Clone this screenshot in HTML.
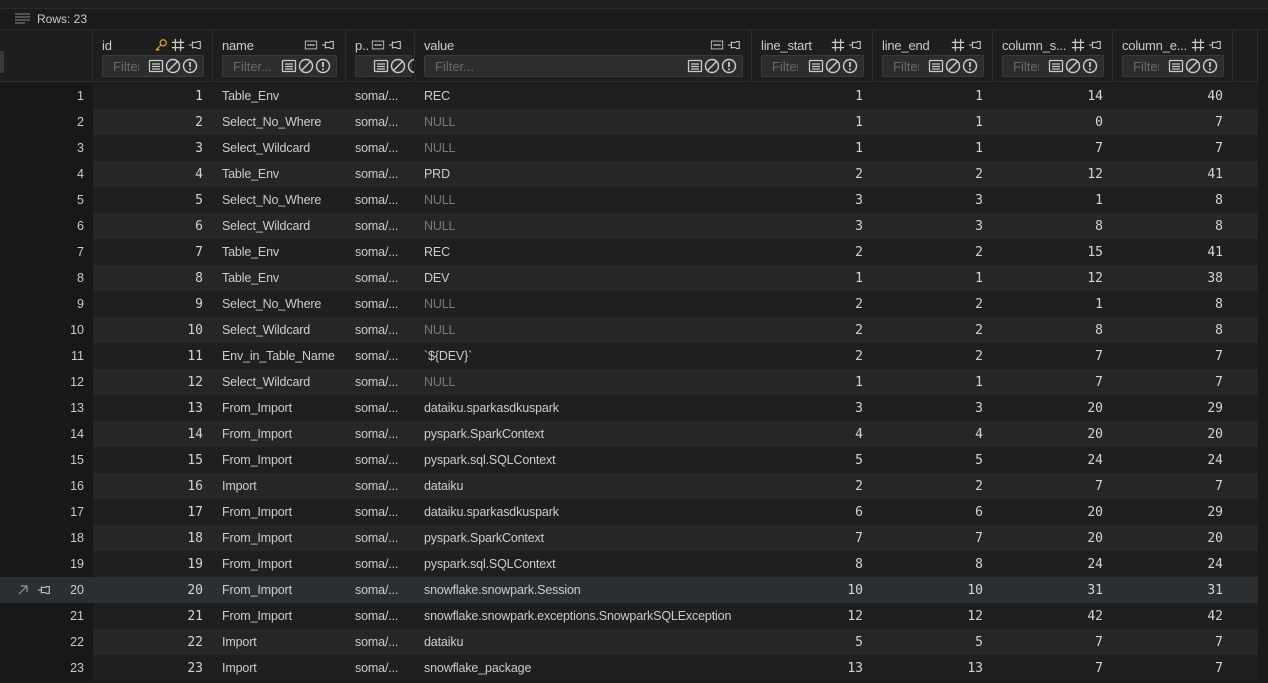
<!DOCTYPE html>
<html><head><meta charset="utf-8">
<style>
*{box-sizing:border-box;margin:0;padding:0}
body{width:1268px;height:683px;background:#1a1a1a;overflow:hidden;position:relative;font-family:"Liberation Sans","DejaVu Sans",sans-serif;font-size:12.5px;color:#cccccc}
.top{position:absolute;left:0;top:0;width:1268px;height:9px;background:#1f1f1f;border-bottom:1px solid #2b2b2b}
.bar{position:absolute;left:0;top:9px;width:1268px;height:21px;background:#1b1b1b;border-bottom:1px solid #2b2b2b}
.bar span{position:absolute;left:37px;top:3px;font-size:12px;color:#cccccc}
.strip{position:absolute;left:0;top:51px;width:4px;height:22px;background:#3a3a3a}
.hdr{position:absolute;top:30px;height:52px;background:#1e1e1e;border-bottom:1px solid #2e2e2e;border-right:1px solid #2e2e2e}
.hl{position:absolute;left:9px;top:8px;font-size:13px;letter-spacing:-0.2px;color:#cccccc;white-space:nowrap}
.hi{position:absolute;right:10px;top:8px;display:flex;gap:3px}
.fb{position:absolute;left:9px;right:8px;top:25px;height:22px;background:#2d2d2d;border:1px solid #3a3a3a;border-radius:2px}
.fb span{position:absolute;left:10px;top:3px;color:#6b6b6b;font-size:13px;white-space:nowrap;overflow:hidden}
.fi{position:absolute;right:5px;top:2px;display:flex;gap:1px}
svg{display:block}
table{position:absolute;left:0;top:83px;border-collapse:collapse;table-layout:fixed;width:1258px}
td{height:26px;padding:0 9px;white-space:nowrap;overflow:hidden;font-size:12.5px;letter-spacing:-0.15px}
tr:nth-child(odd) td{background:#1f1f1f}
tr:nth-child(even) td{background:#262626}
td.ix{background:#181818 !important;text-align:right;padding-right:9px;color:#cccccc;letter-spacing:0}
.n{text-align:right;font-family:"DejaVu Sans Mono","Liberation Mono",monospace;font-size:13px;padding-right:10px;color:#d4d4d4;letter-spacing:0}
.nl{color:#7a7a7a}
tr.sel td{background:#2b2f31 !important}
</style></head><body>
<svg width="0" height="0" style="position:absolute">
<defs>
<symbol id="pin" viewBox="0 0 16 16"><path d="M1 8h4M5 4v8M5 5h5l1 -1h3v8h-3l-1-1H5" fill="none" stroke="#cccccc" stroke-width="1.2"/></symbol>
<symbol id="hash" viewBox="0 0 16 16"><path d="M5 1v14M11 1v14M1 5h14M1 11h14" fill="none" stroke="#cccccc" stroke-width="1.4"/></symbol>
<symbol id="abc" viewBox="0 0 16 16"><rect x="1.5" y="3.5" width="13" height="9" fill="none" stroke="#cccccc"/><path d="M4 8h8" stroke="#cccccc" stroke-width="2" stroke-dasharray="1.5 .7"/></symbol>
<symbol id="key" viewBox="0 0 16 16"><circle cx="10.5" cy="5.5" r="3.5" fill="none" stroke="#e0a030" stroke-width="1.4"/><path d="M8 8L2 14M4 12l2 2M3 13l1.5 1.5" fill="none" stroke="#e0a030" stroke-width="1.4"/></symbol>
<symbol id="lst" viewBox="0 0 16 16"><rect x="1.5" y="2.5" width="13" height="11" rx="1" fill="none" stroke="#cccccc" stroke-width="1.3"/><path d="M4 6h8M4 8.5h8M4 11h8" stroke="#cccccc" stroke-width="1.2"/></symbol>
<symbol id="nul" viewBox="0 0 16 16"><circle cx="8" cy="8" r="6.5" fill="none" stroke="#cccccc" stroke-width="1.4"/><path d="M3.5 12.5l9-9" stroke="#cccccc" stroke-width="1.4"/></symbol>
<symbol id="exc" viewBox="0 0 16 16"><circle cx="8" cy="8" r="6.5" fill="none" stroke="#cccccc" stroke-width="1.4"/><path d="M8 4v5" stroke="#cccccc" stroke-width="1.8"/><circle cx="8" cy="11.3" r="1" fill="#cccccc"/></symbol>
</defs></svg>
<div class="top"></div>
<div class="bar"><svg style="position:absolute;left:15px;top:4px" width="16" height="12" viewBox="0 0 16 12"><path d="M0 1h15M0 4h15M0 7h15M0 10h10" stroke="#8a8a8a" stroke-width="1"/></svg><span>Rows: 23</span></div>
<div class="hdr" style="left:0;width:93px;background:#1e1e1e"></div>
<div class="strip"></div>

<div class="hdr" style="left:93px;width:120px"><div class="hl">id</div><div class="hi"><svg width="14" height="14"><use href="#key"/></svg><svg width="14" height="14"><use href="#hash"/></svg><svg width="14" height="14"><use href="#pin"/></svg></div><div class="fb"><span style="width:26px">Filter...</span><div class="fi"><svg width="16" height="16"><use href="#lst"/></svg><svg width="16" height="16"><use href="#nul"/></svg><svg width="16" height="16"><use href="#exc"/></svg></div></div></div>

<div class="hdr" style="left:213px;width:133px"><div class="hl">name</div><div class="hi"><svg width="14" height="14"><use href="#abc"/></svg><svg width="14" height="14"><use href="#pin"/></svg></div><div class="fb"><span style="width:40px">Filter...</span><div class="fi"><svg width="16" height="16"><use href="#lst"/></svg><svg width="16" height="16"><use href="#nul"/></svg><svg width="16" height="16"><use href="#exc"/></svg></div></div></div>

<div class="hdr" style="left:346px;width:69px;overflow:hidden"><div class="hl">p..</div><div class="hi" style="right:12px"><svg width="14" height="14"><use href="#abc"/></svg><svg width="14" height="14"><use href="#pin"/></svg></div><div class="fb" style="right:2px"><div class="fi" style="right:-12px"><svg width="16" height="16"><use href="#lst"/></svg><svg width="16" height="16"><use href="#nul"/></svg><svg width="16" height="16"><use href="#exc"/></svg></div></div></div>

<div class="hdr" style="left:415px;width:337px"><div class="hl">value</div><div class="hi"><svg width="14" height="14"><use href="#abc"/></svg><svg width="14" height="14"><use href="#pin"/></svg></div><div class="fb"><span>Filter...</span><div class="fi"><svg width="16" height="16"><use href="#lst"/></svg><svg width="16" height="16"><use href="#nul"/></svg><svg width="16" height="16"><use href="#exc"/></svg></div></div></div>

<div class="hdr" style="left:752px;width:121px"><div class="hl">line_start</div><div class="hi"><svg width="14" height="14"><use href="#hash"/></svg><svg width="14" height="14"><use href="#pin"/></svg></div><div class="fb"><span style="width:26px">Filter...</span><div class="fi"><svg width="16" height="16"><use href="#lst"/></svg><svg width="16" height="16"><use href="#nul"/></svg><svg width="16" height="16"><use href="#exc"/></svg></div></div></div>

<div class="hdr" style="left:873px;width:120px"><div class="hl">line_end</div><div class="hi"><svg width="14" height="14"><use href="#hash"/></svg><svg width="14" height="14"><use href="#pin"/></svg></div><div class="fb"><span style="width:26px">Filter...</span><div class="fi"><svg width="16" height="16"><use href="#lst"/></svg><svg width="16" height="16"><use href="#nul"/></svg><svg width="16" height="16"><use href="#exc"/></svg></div></div></div>

<div class="hdr" style="left:993px;width:120px"><div class="hl">column_s...</div><div class="hi"><svg width="14" height="14"><use href="#hash"/></svg><svg width="14" height="14"><use href="#pin"/></svg></div><div class="fb"><span style="width:26px">Filter...</span><div class="fi"><svg width="16" height="16"><use href="#lst"/></svg><svg width="16" height="16"><use href="#nul"/></svg><svg width="16" height="16"><use href="#exc"/></svg></div></div></div>

<div class="hdr" style="left:1113px;width:120px"><div class="hl">column_e...</div><div class="hi"><svg width="14" height="14"><use href="#hash"/></svg><svg width="14" height="14"><use href="#pin"/></svg></div><div class="fb"><span style="width:26px">Filter...</span><div class="fi"><svg width="16" height="16"><use href="#lst"/></svg><svg width="16" height="16"><use href="#nul"/></svg><svg width="16" height="16"><use href="#exc"/></svg></div></div></div>
<div class="hdr" style="left:1233px;width:25px"></div>

<table>
<colgroup><col style="width:93px"><col style="width:120px"><col style="width:133px"><col style="width:69px"><col style="width:337px"><col style="width:121px"><col style="width:120px"><col style="width:120px"><col style="width:120px"><col style="width:25px"></colgroup>
<tr><td class="ix">1</td><td class="n">1</td><td>Table_Env</td><td>soma/...</td><td>REC</td><td class="n">1</td><td class="n">1</td><td class="n">14</td><td class="n">40</td><td></td></tr>
<tr><td class="ix">2</td><td class="n">2</td><td>Select_No_Where</td><td>soma/...</td><td class="nl">NULL</td><td class="n">1</td><td class="n">1</td><td class="n">0</td><td class="n">7</td><td></td></tr>
<tr><td class="ix">3</td><td class="n">3</td><td>Select_Wildcard</td><td>soma/...</td><td class="nl">NULL</td><td class="n">1</td><td class="n">1</td><td class="n">7</td><td class="n">7</td><td></td></tr>
<tr><td class="ix">4</td><td class="n">4</td><td>Table_Env</td><td>soma/...</td><td>PRD</td><td class="n">2</td><td class="n">2</td><td class="n">12</td><td class="n">41</td><td></td></tr>
<tr><td class="ix">5</td><td class="n">5</td><td>Select_No_Where</td><td>soma/...</td><td class="nl">NULL</td><td class="n">3</td><td class="n">3</td><td class="n">1</td><td class="n">8</td><td></td></tr>
<tr><td class="ix">6</td><td class="n">6</td><td>Select_Wildcard</td><td>soma/...</td><td class="nl">NULL</td><td class="n">3</td><td class="n">3</td><td class="n">8</td><td class="n">8</td><td></td></tr>
<tr><td class="ix">7</td><td class="n">7</td><td>Table_Env</td><td>soma/...</td><td>REC</td><td class="n">2</td><td class="n">2</td><td class="n">15</td><td class="n">41</td><td></td></tr>
<tr><td class="ix">8</td><td class="n">8</td><td>Table_Env</td><td>soma/...</td><td>DEV</td><td class="n">1</td><td class="n">1</td><td class="n">12</td><td class="n">38</td><td></td></tr>
<tr><td class="ix">9</td><td class="n">9</td><td>Select_No_Where</td><td>soma/...</td><td class="nl">NULL</td><td class="n">2</td><td class="n">2</td><td class="n">1</td><td class="n">8</td><td></td></tr>
<tr><td class="ix">10</td><td class="n">10</td><td>Select_Wildcard</td><td>soma/...</td><td class="nl">NULL</td><td class="n">2</td><td class="n">2</td><td class="n">8</td><td class="n">8</td><td></td></tr>
<tr><td class="ix">11</td><td class="n">11</td><td>Env_in_Table_Name</td><td>soma/...</td><td>`${DEV}`</td><td class="n">2</td><td class="n">2</td><td class="n">7</td><td class="n">7</td><td></td></tr>
<tr><td class="ix">12</td><td class="n">12</td><td>Select_Wildcard</td><td>soma/...</td><td class="nl">NULL</td><td class="n">1</td><td class="n">1</td><td class="n">7</td><td class="n">7</td><td></td></tr>
<tr><td class="ix">13</td><td class="n">13</td><td>From_Import</td><td>soma/...</td><td>dataiku.sparkasdkuspark</td><td class="n">3</td><td class="n">3</td><td class="n">20</td><td class="n">29</td><td></td></tr>
<tr><td class="ix">14</td><td class="n">14</td><td>From_Import</td><td>soma/...</td><td>pyspark.SparkContext</td><td class="n">4</td><td class="n">4</td><td class="n">20</td><td class="n">20</td><td></td></tr>
<tr><td class="ix">15</td><td class="n">15</td><td>From_Import</td><td>soma/...</td><td>pyspark.sql.SQLContext</td><td class="n">5</td><td class="n">5</td><td class="n">24</td><td class="n">24</td><td></td></tr>
<tr><td class="ix">16</td><td class="n">16</td><td>Import</td><td>soma/...</td><td>dataiku</td><td class="n">2</td><td class="n">2</td><td class="n">7</td><td class="n">7</td><td></td></tr>
<tr><td class="ix">17</td><td class="n">17</td><td>From_Import</td><td>soma/...</td><td>dataiku.sparkasdkuspark</td><td class="n">6</td><td class="n">6</td><td class="n">20</td><td class="n">29</td><td></td></tr>
<tr><td class="ix">18</td><td class="n">18</td><td>From_Import</td><td>soma/...</td><td>pyspark.SparkContext</td><td class="n">7</td><td class="n">7</td><td class="n">20</td><td class="n">20</td><td></td></tr>
<tr><td class="ix">19</td><td class="n">19</td><td>From_Import</td><td>soma/...</td><td>pyspark.sql.SQLContext</td><td class="n">8</td><td class="n">8</td><td class="n">24</td><td class="n">24</td><td></td></tr>
<tr class="sel"><td class="ix" style="position:relative"><svg style="position:absolute;left:17px;top:7px" width="12" height="12" viewBox="0 0 12 12"><path d="M2 10L10 2M4 2h6v6" fill="none" stroke="#999" stroke-width="1.2"/></svg><svg style="position:absolute;left:37px;top:6px" width="14" height="14"><use href="#pin"/></svg>20</td><td class="n">20</td><td>From_Import</td><td>soma/...</td><td>snowflake.snowpark.Session</td><td class="n">10</td><td class="n">10</td><td class="n">31</td><td class="n">31</td><td></td></tr>
<tr><td class="ix">21</td><td class="n">21</td><td>From_Import</td><td>soma/...</td><td>snowflake.snowpark.exceptions.SnowparkSQLException</td><td class="n">12</td><td class="n">12</td><td class="n">42</td><td class="n">42</td><td></td></tr>
<tr><td class="ix">22</td><td class="n">22</td><td>Import</td><td>soma/...</td><td>dataiku</td><td class="n">5</td><td class="n">5</td><td class="n">7</td><td class="n">7</td><td></td></tr>
<tr><td class="ix">23</td><td class="n">23</td><td>Import</td><td>soma/...</td><td>snowflake_package</td><td class="n">13</td><td class="n">13</td><td class="n">7</td><td class="n">7</td><td></td></tr>
</table>
</body></html>
